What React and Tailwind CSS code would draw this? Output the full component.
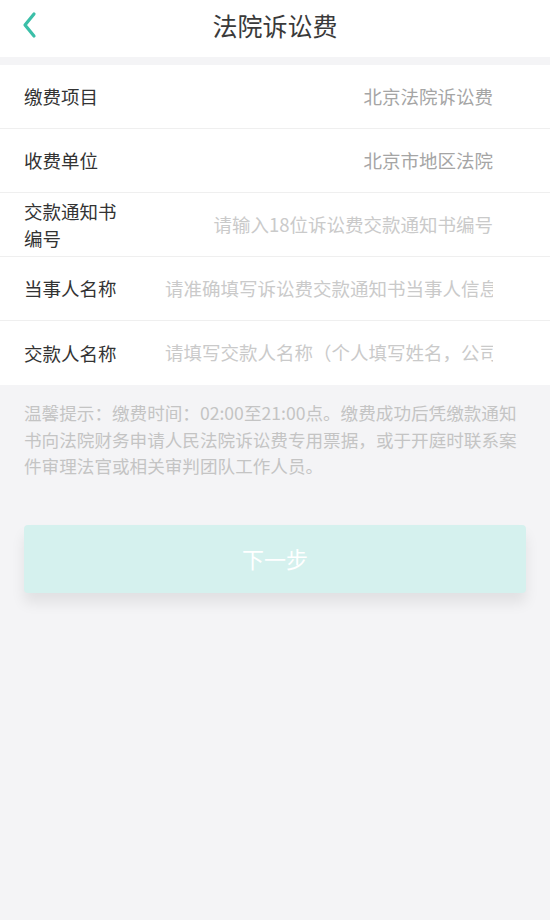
import React from "react";

const rows = [
  { label: "缴费项目", value: "北京法院诉讼费" },
  { label: "收费单位", value: "北京市地区法院" },
  { label: "交款通知书编号", placeholder: "请输入18位诉讼费交款通知书编号", right: true },
  { label: "当事人名称", placeholder: "请准确填写诉讼费交款通知书当事人信息" },
  { label: "交款人名称", placeholder: "请填写交款人名称（个人填写姓名，公司填写全称）" },
];

export default function App() {
  return (
    <div
      className="min-h-[920px] bg-[#f4f4f6] text-[#333]"
      style={{ fontFamily: '"Noto Sans CJK SC", "Noto Sans", sans-serif' }}
    >
      {/* header */}
      <div className="relative h-[57px] bg-white flex items-center justify-center pb-[6px]">
        <button className="absolute left-[20px] top-[11px] p-0">
          <svg width="20" height="28" viewBox="0 0 20 28" fill="none">
            <path
              d="M14 3 L5 14 L14 25"
              stroke="#3bbfa8"
              strokeWidth="3.2"
              strokeLinecap="round"
              strokeLinejoin="round"
            />
          </svg>
        </button>
        <h1 className="text-[25px] leading-none text-[#3a3a3a]">法院诉讼费</h1>
      </div>

      {/* form card */}
      <div className="mt-[8px] bg-white">
        {rows.map((r, i) => (
          <div
            key={r.label}
            className={`flex items-center h-[64px] pl-[24px] pr-[57px] ${
              i < rows.length - 1 ? "border-b-[1.5px] border-[#efefef]" : ""
            }`}
          >
            <div className="w-[100px] shrink-0 text-[18.5px] leading-[27px] text-[#333]">
              {r.label}
            </div>
            <div className="flex-1 ml-[41px] overflow-hidden">
              {r.value ? (
                <div className="text-right text-[18.5px] text-[#a5a5a5] whitespace-nowrap">
                  {r.value}
                </div>
              ) : (
                <input
                  className={`w-full bg-transparent outline-none text-[18.5px] placeholder:text-[#cacaca] ${
                    r.right ? "text-right" : ""
                  }`}
                  placeholder={r.placeholder}
                />
              )}
            </div>
          </div>
        ))}
      </div>

      {/* tip */}
      <p className="px-[24px] pt-[15px] text-[17.6px] leading-[26.5px] text-[#c4c4c4]">
        温馨提示：缴费时间：02:00至21:00点。缴费成功后凭缴款通知书向法院财务申请人民法院诉讼费专用票据，或于开庭时联系案件审理法官或相关审判团队工作人员。
      </p>

      {/* next button */}
      <div className="px-[24px] pt-[45px]">
        <button className="w-full h-[68px] rounded-[4px] bg-[#d5f1ee] text-white text-[22px] shadow-[0_10px_14px_rgba(0,0,0,0.08)]">
          下一步
        </button>
      </div>
    </div>
  );
}
